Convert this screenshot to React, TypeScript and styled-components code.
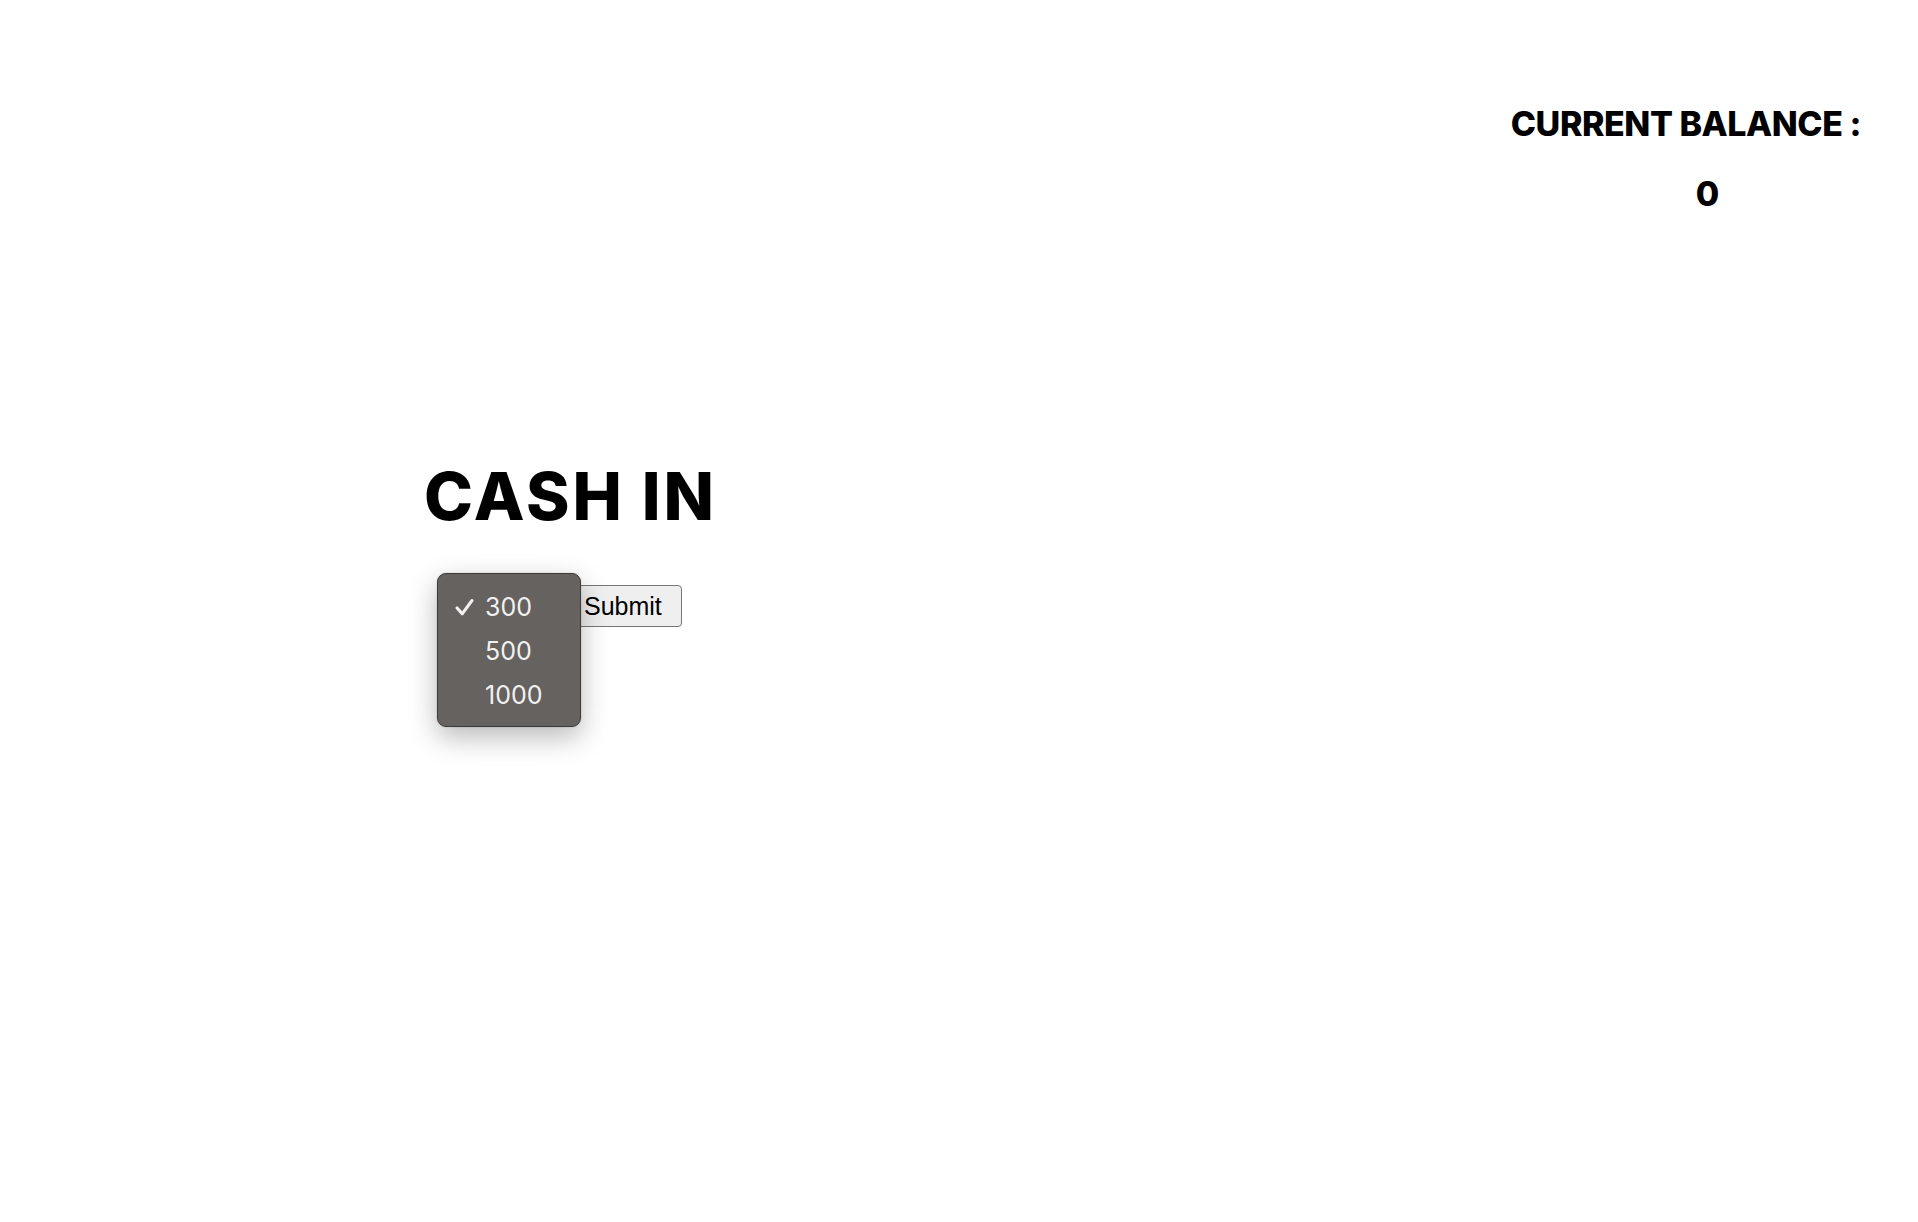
import React from "react";
import styled, { createGlobalStyle } from "styled-components";

const Global = createGlobalStyle`
  html, body { margin: 0; padding: 0; background: #ffffff; }
  body { font-family: Inter, "Liberation Sans", sans-serif; color: #000; }
`;

const Page = styled.div`
  width: 1918px;
  height: 1222px;
  display: flex;
  flex-direction: column;
`;

const Header = styled.header`
  display: flex;
  justify-content: flex-end;
  padding: 104px 57px 0 0;
`;

const Balance = styled.div`
  display: flex;
  flex-direction: column;
  align-items: flex-start;
  gap: 30px;
`;

const BalanceLabel = styled.h2`
  margin: 0;
  font-family: Inter, sans-serif;
  font-weight: 800;
  font-size: 34px;
  line-height: 40px;
  letter-spacing: -0.45px;
  white-space: pre;
`;

const BalanceValue = styled.h2`
  margin: 0 0 0 185px;
  font-family: Inter, sans-serif;
  font-weight: 800;
  font-size: 34px;
  line-height: 40px;
`;

const Main = styled.main`
  display: flex;
  flex-direction: column;
  align-items: flex-start;
  padding: 246px 0 0 424px;
  gap: 53px;
`;

const Title = styled.h1`
  margin: 0;
  font-family: Inter, sans-serif;
  font-weight: 800;
  font-size: 66px;
  line-height: 72px;
  letter-spacing: 2.8px;
`;

const Form = styled.form`
  display: flex;
  align-items: center;
  margin-left: 16px;
  position: relative;
`;

const SelectBox = styled.div`
  width: 130px;
  height: 42px;
`;

const Menu = styled.ul`
  position: absolute;
  left: -3px;
  top: -12px;
  width: 144px;
  margin: 0;
  padding: 11px 0 9px;
  list-style: none;
  background: #656260;
  border: 1.5px solid #3e3c3b;
  border-radius: 9px;
  box-shadow: 0 10px 28px rgba(0, 0, 0, 0.28), 0 0 2px rgba(0, 0, 0, 0.2);
  box-sizing: border-box;
  z-index: 2;
`;

const Item = styled.li`
  display: flex;
  align-items: center;
  height: 44px;
  padding-left: 17px;
  font-family: Inter, sans-serif;
  font-size: 25px;
  color: #f2f1f0;
`;

const Check = styled.span`
  width: 30px;
  display: inline-flex;
  align-items: center;
`;

const Button = styled.button`
  height: 42px;
  padding: 0 19px 0 13px;
  font-family: "Liberation Sans", Arial, sans-serif;
  font-size: 25px;
  color: #000;
  background: #efefef;
  border: 1.5px solid #767676;
  border-radius: 4px;
`;

const options = ["300", "500", "1000"];

export default function App() {
  return (
    <Page>
      <Global />
      <Header>
        <Balance>
          <BalanceLabel>CURRENT BALANCE :</BalanceLabel>
          <BalanceValue>0</BalanceValue>
        </Balance>
      </Header>
      <Main>
        <Title>CASH IN</Title>
        <Form onSubmit={(e) => e.preventDefault()}>
          <SelectBox />
          <Button type="submit">Submit</Button>
          <Menu>
            {options.map((o, i) => (
              <Item key={o}>
                <Check>
                  {i === 0 && (
                    <svg width="19" height="19" viewBox="0 0 18 18">
                      <path d="M2 9.5 L6.8 15 L16 2.5" fill="none" stroke="#f2f1f0" strokeWidth="3" strokeLinecap="round" strokeLinejoin="round" />
                    </svg>
                  )}
                </Check>
                {o}
              </Item>
            ))}
          </Menu>
        </Form>
      </Main>
    </Page>
  );
}
